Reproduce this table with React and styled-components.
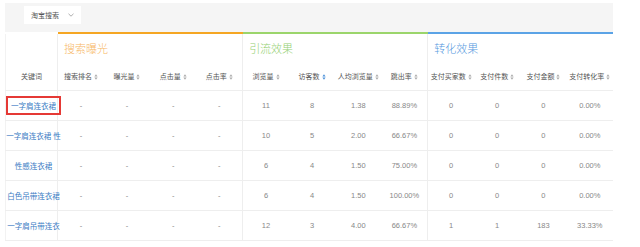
import React from 'react';
import styled, { createGlobalStyle } from 'styled-components';

const GlobalStyle = createGlobalStyle`
  body {
    margin: 0;
    background: #fff;
    font-family: "Liberation Sans", "Noto Sans CJK SC", sans-serif;
  }
`;

const Page = styled.div`
  width: 608px;
  padding: 3px 0 0 5px;
`;

const Toolbar = styled.div`
  height: 29px;
  background: #f5f5f5;
  display: flex;
  align-items: flex-start;
  padding: 3px 0 0 19px;
  box-sizing: border-box;
`;

const Select = styled.div`
  width: 57px;
  height: 18px;
  background: #fff;
  display: flex;
  align-items: center;
  justify-content: space-between;
  padding: 0 7px;
  box-sizing: border-box;
  font-size: 7px;
  color: #555;
`;

const Table = styled.table`
  width: 608px;
  border-collapse: collapse;
  table-layout: fixed;
  border-left: 1px solid #f2f2f2;
`;

const GroupCell = styled.th`
  height: 28px;
  border-top: 2px solid ${(p) => p.$color};
  border-left: 1px solid #eee;
  text-align: left;
  padding: 0 0 0 6px;
  font-size: 11px;
  font-weight: 300;
  color: ${(p) => p.$text};
`;

const Blank = styled.th`
  border-top: 2px solid transparent;
`;

const HeadCell = styled.th`
  height: 28px;
  padding: 0;
  font-size: 7px;
  font-weight: normal;
  color: #555;
  white-space: nowrap;
  border-bottom: 1px solid #eee;
  border-left: ${(p) => (p.$edge ? '1px solid #eee' : 'none')};
`;

const Cell = styled.td`
  height: 29px;
  padding: 0;
  text-align: center;
  font-size: 7.5px;
  color: #888;
  border-bottom: 1px solid #eee;
  border-left: ${(p) => (p.$edge ? '1px solid #eee' : 'none')};
`;

const KeyWrap = styled.div`
  display: flex;
  justify-content: center;
  white-space: nowrap;
  padding-left: 4px;
`;

const Keyword = styled.span`
  color: #3a7cc4;
  font-size: 7.5px;
  padding: 2px 3px;
  border: 2px solid ${(p) => (p.$marked ? '#e53935' : 'transparent')};
`;

const Sort = ({ active }) => (
  <svg width="4" height="6" viewBox="0 0 4 6" style={{ marginLeft: 2, verticalAlign: 'middle' }}>
    <path d="M2 0.3 L3.6 2.4 L0.4 2.4 Z" fill={active ? '#4a90d9' : '#aaa'} />
    <path d="M2 5.7 L3.6 3.6 L0.4 3.6 Z" fill={active ? '#4a90d9' : '#aaa'} />
  </svg>
);

const groups = [
  { title: '搜索曝光', color: '#f5a623', text: '#f7b866' },
  { title: '引流效果', color: '#9bd56b', text: '#93cf72' },
  { title: '转化效果', color: '#5ba3e6', text: '#5497de' },
];

const heads = [
  '搜索排名', '曝光量', '点击量', '点击率',
  '浏览量', '访客数', '人均浏览量', '跳出率',
  '支付买家数', '支付件数', '支付金额', '支付转化率',
];

const rows = [
  ['一字肩连衣裙', '11', '8', '1.38', '88.89%', '0', '0', '0', '0.00%'],
  ['一字肩连衣裙 性', '10', '5', '2.00', '66.67%', '0', '0', '0', '0.00%'],
  ['性感连衣裙', '6', '4', '1.50', '75.00%', '0', '0', '0', '0.00%'],
  ['白色吊带连衣裙', '6', '4', '1.50', '100.00%', '0', '0', '0', '0.00%'],
  ['一字肩吊带连衣', '12', '3', '4.00', '66.67%', '1', '1', '183', '33.33%'],
];

export default function App() {
  return (
    <>
      <GlobalStyle />
      <Page>
        <Toolbar>
          <Select>
            <span>淘宝搜索</span>
            <svg width="6" height="4" viewBox="0 0 6 4">
              <path d="M0.5 0.8 L3 3.2 L5.5 0.8" stroke="#999" strokeWidth="0.8" fill="none" />
            </svg>
          </Select>
        </Toolbar>
        <Table>
          <colgroup>
            <col style={{ width: 52 }} />
            {heads.map((h) => (
              <col key={h} />
            ))}
          </colgroup>
          <thead>
            <tr>
              <Blank />
              {groups.map((g) => (
                <GroupCell key={g.title} colSpan={4} $color={g.color} $text={g.text}>
                  {g.title}
                </GroupCell>
              ))}
            </tr>
            <tr>
              <HeadCell>关键词</HeadCell>
              {heads.map((h, i) => (
                <HeadCell key={h} $edge={i % 4 === 0}>
                  {h}
                  <Sort active={h === '访客数'} />
                </HeadCell>
              ))}
            </tr>
          </thead>
          <tbody>
            {rows.map((r, ri) => {
              const [kw, ...vals] = r;
              const cells = ['-', '-', '-', '-', ...vals];
              return (
                <tr key={ri}>
                  <Cell>
                    <KeyWrap>
                      <Keyword $marked={ri === 0}>{kw}</Keyword>
                    </KeyWrap>
                  </Cell>
                  {cells.map((v, i) => (
                    <Cell key={i} $edge={i % 4 === 0}>
                      {v}
                    </Cell>
                  ))}
                </tr>
              );
            })}
          </tbody>
        </Table>
      </Page>
    </>
  );
}
